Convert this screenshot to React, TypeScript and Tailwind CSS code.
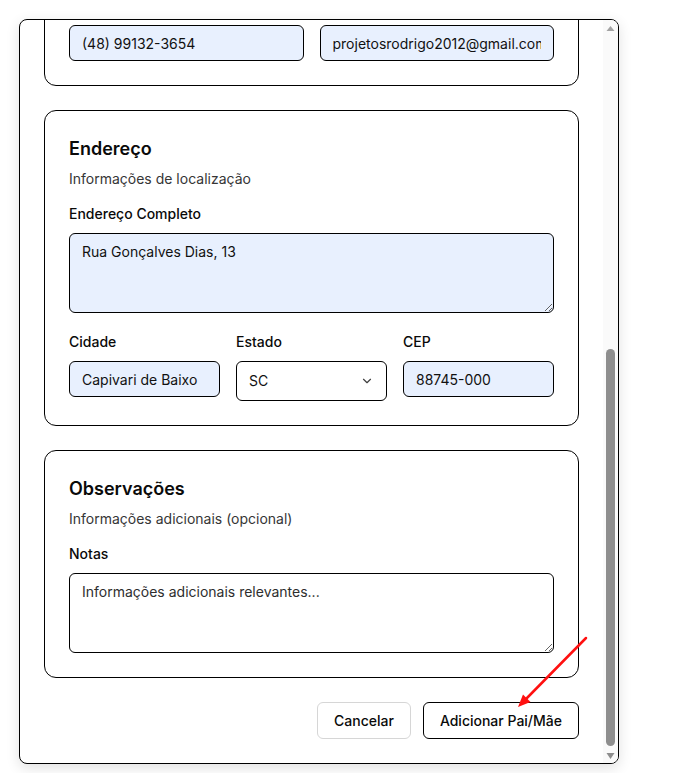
import { useLayoutEffect, useRef } from "react";
import { ChevronDown } from "lucide-react";

const font = { fontFamily: "Inter, 'Noto Sans', sans-serif" };

function Card({ title, subtitle, children }: { title: string; subtitle: string; children: React.ReactNode }) {
  return (
    <div className="rounded-xl border border-black bg-white p-6">
      <h3 className="text-lg leading-7 font-semibold text-[#0a0a0a]">{title}</h3>
      <p className="mt-1.5 text-sm leading-5 text-[#363636]">{subtitle}</p>
      <div className="mt-[15px]">{children}</div>
    </div>
  );
}

function Field({ label, children }: { label: string; children: React.ReactNode }) {
  return (
    <div className="flex flex-col gap-[9px]">
      <label className="text-sm leading-5 font-medium text-[#0a0a0a]">{label}</label>
      {children}
    </div>
  );
}

const inputCls =
  "h-9 w-full rounded-md border border-black bg-[#e8f0fe] px-3 text-sm text-[#111] outline-none";

export default function App() {
  const scrollRef = useRef<HTMLDivElement>(null);

  // o modal aparece rolado até o final
  useLayoutEffect(() => {
    if (scrollRef.current) scrollRef.current.scrollTop = scrollRef.current.scrollHeight;
  }, []);

  return (
    <div className="relative h-[773px] w-[685px] bg-white pl-[19px] pt-[19px]" style={font}>
      <div className="flex h-[745px] w-[600px] overflow-hidden rounded-lg border border-black bg-white shadow-[0_4px_14px_rgba(0,0,0,0.12)]">
        <div
          ref={scrollRef}
          className="flex flex-1 flex-col gap-6 overflow-y-auto p-6 [scrollbar-width:none]"
        >
          <div className="flex flex-col gap-1.5">
            <h2 className="text-lg font-semibold">Adicionar Pai/Mãe</h2>
            <p className="text-sm text-[#363636]">Preencha os dados do responsável</p>
          </div>

          <Card title="Dados Pessoais" subtitle="Informações básicas do responsável">
            <div className="grid grid-cols-2 gap-4">
              <Field label="Nome Completo">
                <input className={inputCls} defaultValue="Rodrigo Silva" />
              </Field>
              <Field label="CPF">
                <input className={inputCls} defaultValue="000.000.000-00" />
              </Field>
            </div>
          </Card>

          <Card title="Contato" subtitle="Telefone e email">
            <div className="grid grid-cols-2 gap-4">
              <Field label="Telefone">
                <input className={inputCls} defaultValue="(48) 99132-3654" />
              </Field>
              <Field label="Email">
                <input className={inputCls} defaultValue="projetosrodrigo2012@gmail.com" />
              </Field>
            </div>
          </Card>

          <Card title="Endereço" subtitle="Informações de localização">
            <Field label="Endereço Completo">
              <textarea
                className="h-20 w-full rounded-md border border-black bg-[#e8f0fe] px-3 py-2 text-sm text-[#111] outline-none"
                defaultValue="Rua Gonçalves Dias, 13"
              />
            </Field>
            <div className="mt-[19px] grid grid-cols-3 gap-4">
              <Field label="Cidade">
                <input className={inputCls} defaultValue="Capivari de Baixo" />
              </Field>
              <Field label="Estado">
                <button className="flex h-10 w-full items-center justify-between rounded-md border border-black bg-white px-3 text-sm text-[#111]">
                  <span>SC</span>
                  <ChevronDown size={14} className="text-neutral-700" />
                </button>
              </Field>
              <Field label="CEP">
                <input className={inputCls} defaultValue="88745-000" />
              </Field>
            </div>
          </Card>

          <Card title="Observações" subtitle="Informações adicionais (opcional)">
            <Field label="Notas">
              <textarea
                className="h-20 w-full rounded-md border border-black bg-white px-3 py-2 text-sm text-[#111] outline-none placeholder:text-[#2e2e2e]"
                placeholder="Informações adicionais relevantes..."
              />
            </Field>
          </Card>

          <div className="flex justify-end gap-3">
            <button className="h-[37px] rounded-md border border-[#d6d6d6] bg-white px-4 text-sm font-medium text-[#0a0a0a]">
              Cancelar
            </button>
            <button className="h-[37px] rounded-md border border-black bg-white px-4 text-sm font-medium text-[#0a0a0a]">
              Adicionar Pai/Mãe
            </button>
          </div>
        </div>

        {/* barra de rolagem */}
        <div className="flex w-[15px] flex-col items-center bg-[#fafafa]">
          <svg width="9" height="16" viewBox="0 0 9 16" className="mt-[5px] shrink-0">
            <polygon points="0.5,6 4.5,1 8.5,6" fill="#a3a3a3" />
          </svg>
          <div className="flex-1" />
          <div className="h-[397px] w-[9px] rounded-full bg-[#8e8e8e]" />
          <svg width="9" height="17" viewBox="0 0 9 17" className="shrink-0">
            <polygon points="0.5,7 8.5,7 4.5,13" fill="#8e8e8e" />
          </svg>
        </div>
      </div>

      {/* seta vermelha */}
      <svg className="pointer-events-none absolute inset-0" width="685" height="773">
        <line x1="586" y1="638" x2="525" y2="700" stroke="#ff1010" strokeWidth="2.5" strokeLinecap="round" />
        <polygon points="518,707 530.5,702 523,694.5" fill="#ff1010" />
      </svg>
    </div>
  );
}
